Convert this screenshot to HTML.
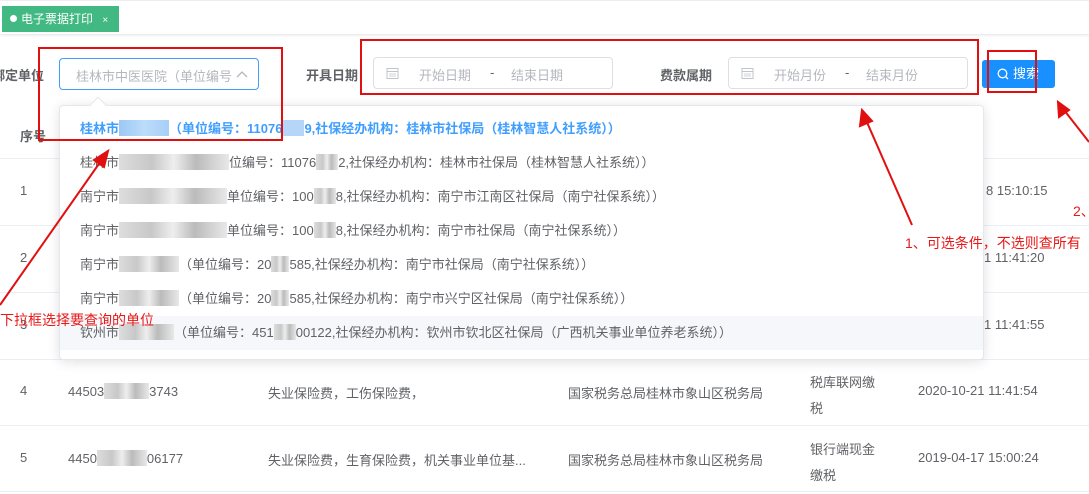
<!DOCTYPE html>
<html><head><meta charset="utf-8"><style>
*{margin:0;padding:0;box-sizing:border-box}
body{width:1089px;height:494px;overflow:hidden;background:#fff;font-family:"Liberation Sans","Noto Sans CJK SC",sans-serif;font-size:13px;color:#606266;position:relative}
.a{position:absolute;white-space:nowrap}
.tagbar{position:absolute;left:0;top:0;width:1089px;height:34px;background:#fff;box-shadow:0 1px 3px rgba(0,0,0,.12);border-top:1px solid #eee}
.tag{position:absolute;left:2px;top:5px;width:117px;height:26px;background:#42b983;color:#fff;font-size:12px;line-height:26px;padding-left:8px}
.tag i{display:inline-block;width:7px;height:7px;border-radius:50%;background:#fff;margin-right:4px;vertical-align:1px}
.lbl{font-weight:bold;color:#606266;font-size:13px}
.box{position:absolute;border:1px solid #dcdfe6;border-radius:4px;background:#fff}
.ph{color:#b4b7bd}
.row{position:absolute;left:0;width:1089px;border-bottom:1px solid #ebeef5}
.dd{position:absolute;left:59px;top:105px;width:925px;height:255px;background:#fff;border:1px solid #e4e7ed;border-radius:4px;box-shadow:0 2px 12px rgba(0,0,0,.12);overflow:hidden}
.it{position:absolute;left:0;width:925px;height:34px;line-height:34px;padding-left:20px;color:#606266;font-size:13px;white-space:nowrap}
.bl{display:inline-block;height:16px;vertical-align:-3px;background:linear-gradient(90deg,#ddd,#c8c8c8 30%,#eee 50%,#bbb 70%,#e8e8e8)}
.red{position:absolute;border:2px solid #e01010}
.rt{color:#e81818;font-size:14px}
</style></head><body>
<div class="tagbar"><div class="tag"><i></i>电子票据打印 <span style="font-size:10px;margin-left:6px">×</span></div></div>

<div class="a lbl" style="left:-8px;top:65px">绑定单位</div>
<div class="box" style="left:59px;top:58px;width:200px;height:32px;border-color:#409eff"><span class="a ph" style="left:16px;top:7px">桂林市中医医院（单位编号</span>
<svg class="a" style="left:176px;top:11px" width="12" height="8"><polyline points="1,7 6,2 11,7" fill="none" stroke="#b4b7bd" stroke-width="1.3"/></svg></div>
<div class="a lbl" style="left:306px;top:65px">开具日期</div>
<div class="box" style="left:373px;top:57px;width:240px;height:32px"><svg class="a" style="left:12px;top:9px" width="13" height="13"><rect x="1" y="1.5" width="11" height="10" fill="none" stroke="#c0c4cc"/><line x1="1" y1="4.5" x2="12" y2="4.5" stroke="#c0c4cc"/><line x1="3" y1="7" x2="10" y2="7" stroke="#d0d3d8"/><line x1="3" y1="9" x2="10" y2="9" stroke="#d0d3d8"/></svg><span class="a ph" style="left:45px;top:7px">开始日期</span><span class="a" style="left:116px;top:7px">-</span><span class="a ph" style="left:137px;top:7px">结束日期</span></div>
<div class="a lbl" style="left:660px;top:65px">费款属期</div>
<div class="box" style="left:728px;top:57px;width:240px;height:32px"><svg class="a" style="left:12px;top:9px" width="13" height="13"><rect x="1" y="1.5" width="11" height="10" fill="none" stroke="#c0c4cc"/><line x1="1" y1="4.5" x2="12" y2="4.5" stroke="#c0c4cc"/><line x1="3" y1="7" x2="10" y2="7" stroke="#d0d3d8"/><line x1="3" y1="9" x2="10" y2="9" stroke="#d0d3d8"/></svg><span class="a ph" style="left:45px;top:7px">开始月份</span><span class="a" style="left:116px;top:7px">-</span><span class="a ph" style="left:137px;top:7px">结束月份</span></div>
<div class="a" style="left:982px;top:60px;width:73px;height:28px;background:#1890ff;border-radius:3px;color:#fff;line-height:28px;padding-left:31px;font-size:13px">搜索<svg class="a" style="left:15px;top:8px" width="12" height="12"><circle cx="5.5" cy="5.5" r="4.3" fill="none" stroke="#fff" stroke-width="1.3"/><line x1="8.5" y1="8.5" x2="11" y2="11" stroke="#fff" stroke-width="1.3"/></svg></div>

<div class="row" style="top:112px;height:47px;background:#fff"><span class="a lbl" style="left:20px;top:14px">序号</span></div>
<div class="row" style="top:159px;height:67px"><span class="a" style="left:20px;top:24px">1</span><span class="a" style="left:986px;top:24px">8 15:10:15</span></div>
<div class="row" style="top:226px;height:67px"><span class="a" style="left:20px;top:24px">2</span><span class="a" style="left:984px;top:24px">1 11:41:20</span></div>
<div class="row" style="top:293px;height:67px"><span class="a" style="left:20px;top:24px">3</span><span class="a" style="left:984px;top:24px">1 11:41:55</span></div>
<div class="row" style="top:360px;height:66px"><span class="a" style="left:20px;top:23px">4</span><span class="a" style="left:68px;top:23px">44503<span class="bl" style="width:45px"></span>3743</span><span class="a" style="left:268px;top:23px">失业保险费，工伤保险费，</span><span class="a" style="left:568px;top:23px">国家税务总局桂林市象山区税务局</span><span class="a" style="left:810px;top:10px;line-height:26px">税库联网缴<br>税</span><span class="a" style="left:918px;top:23px">2020-10-21 11:41:54</span></div>
<div class="row" style="top:426px;height:66px"><span class="a" style="left:20px;top:24px">5</span><span class="a" style="left:68px;top:24px">4450<span class="bl" style="width:50px"></span>06177</span><span class="a" style="left:268px;top:24px">失业保险费，生育保险费，机关事业单位基...</span><span class="a" style="left:568px;top:24px">国家税务总局桂林市象山区税务局</span><span class="a" style="left:810px;top:11px;line-height:26px">银行端现金<br>缴税</span><span class="a" style="left:918px;top:24px">2019-04-17 15:00:24</span></div>

<div class="a" style="left:92px;top:99px;width:12px;height:12px;background:#fff;border-left:1px solid #e4e7ed;border-top:1px solid #e4e7ed;transform:rotate(45deg);z-index:3"></div>
<div class="dd">
<div class="it" style="top:6px;color:#409eff;font-weight:bold">桂林市<span class="bl" style="width:50px;background:linear-gradient(90deg,#9cc8f5,#bcdcfa,#a6cff7)"></span>（单位编号：11076<span class="bl" style="width:22px;background:#b5d6f8"></span>9,社保经办机构：桂林市社保局（桂林智慧人社系统））</div>
<div class="it" style="top:40px">桂林市<span class="bl" style="width:110px"></span>位编号：11076<span class="bl" style="width:22px"></span>2,社保经办机构：桂林市社保局（桂林智慧人社系统））</div>
<div class="it" style="top:74px">南宁市<span class="bl" style="width:108px"></span>单位编号：100<span class="bl" style="width:22px"></span>8,社保经办机构：南宁市江南区社保局（南宁社保系统））</div>
<div class="it" style="top:108px">南宁市<span class="bl" style="width:108px"></span>单位编号：100<span class="bl" style="width:22px"></span>8,社保经办机构：南宁市社保局（南宁社保系统））</div>
<div class="it" style="top:142px">南宁市<span class="bl" style="width:60px"></span>（单位编号：20<span class="bl" style="width:18px"></span>585,社保经办机构：南宁市社保局（南宁社保系统））</div>
<div class="it" style="top:176px">南宁市<span class="bl" style="width:60px"></span>（单位编号：20<span class="bl" style="width:18px"></span>585,社保经办机构：南宁市兴宁区社保局（南宁社保系统））</div>
<div class="it" style="top:210px;background:#f5f7fa">钦州市<span class="bl" style="width:55px"></span>（单位编号：451<span class="bl" style="width:22px"></span>00122,社保经办机构：钦州市钦北区社保局（广西机关事业单位养老系统））</div>
<div class="it" style="top:244px;color:#ccc">中国共产党南宁市兴宁区委员会（单位编号：450000000000,社保经办机构：南宁市兴宁区社保局（广西机关事业单位养老系统））</div>
</div>

<div class="red" style="left:38px;top:47px;width:245px;height:94px"></div>
<div class="red" style="left:360px;top:39px;width:619px;height:56px"></div>
<div class="red" style="left:987px;top:50px;width:50px;height:43px"></div>
<svg class="a" style="left:0;top:0" width="1089" height="494">
<g stroke="#e01010" stroke-width="2" fill="#e01010">
<line x1="0" y1="305" x2="103" y2="158"/><polygon points="108,151 94,160 104,167"/>
<line x1="912" y1="225" x2="866" y2="120"/><polygon points="862,110 860,126 872,121"/>
<line x1="1089" y1="142" x2="1064" y2="110"/><polygon points="1058,102 1059,117 1069,110"/>
</g></svg>
<div class="a rt" style="left:905px;top:233px">1、可选条件，不选则查所有</div>
<div class="a rt" style="left:1073px;top:201px">2、</div>
<div class="a rt" style="left:0;top:310px">下拉框选择要查询的单位</div>
</body></html>
